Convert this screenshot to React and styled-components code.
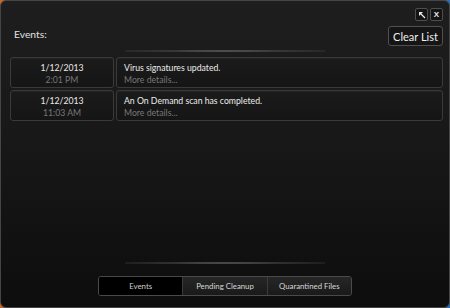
import React from 'react';
import styled, { createGlobalStyle } from 'styled-components';

const GlobalStyle = createGlobalStyle`
  html, body {
    margin: 0;
    padding: 0;
    background: linear-gradient(90deg, #c8662e 0%, #274a78 60%, #2a6db0 100%);
  }
  #root {
    width: 450px;
    height: 308px;
  }
`;

const Window = styled.div`
  box-sizing: border-box;
  width: 450px;
  height: 308px;
  display: flex;
  flex-direction: column;
  border: 1px solid #454545;
  border-radius: 6px;
  background: linear-gradient(180deg, #1e1e1e 0%, #181818 45%, #0d0d0d 100%);
  font-family: Lato, "Open Sans", sans-serif;
  color: #e6e6e6;
  overflow: hidden;
`;

const TitleBar = styled.div`
  display: flex;
  justify-content: flex-end;
  gap: 2px;
  padding: 7px 6px 0 0;
`;

const IconButton = styled.div`
  box-sizing: border-box;
  width: 13px;
  height: 13px;
  display: flex;
  align-items: center;
  justify-content: center;
  border: 1px solid #4e4e4e;
  border-radius: 2px;
  background: #141414;
  color: #e8e8e8;
  font-family: "Liberation Sans", sans-serif;
  font-size: 8px;
  font-weight: bold;
  line-height: 1;
`;

const Header = styled.div`
  display: flex;
  align-items: center;
  justify-content: space-between;
  padding: 0 6px 0 13px;
  margin-top: 5px;
`;

const Title = styled.div`
  font-size: 10.3px;
  color: #e2e2e2;
  margin-top: -4px;
`;

const ClearButton = styled.div`
  box-sizing: border-box;
  height: 20px;
  width: 55px;
  display: flex;
  align-items: center;
  justify-content: center;
  border: 1px solid #505050;
  border-radius: 3px;
  background: #151515;
  font-size: 11px;
  color: #f0f0f0;
`;

const Glow = styled.div`
  height: 2px;
  width: ${p => p.$width}px;
  margin: ${p => p.$margin};
  align-self: center;
  background: radial-gradient(ellipse at center, rgba(140,140,140,0.85) 0%, rgba(90,90,90,0.45) 50%, rgba(40,40,40,0) 100%);
`;

const List = styled.div`
  display: flex;
  flex-direction: column;
  gap: 2px;
  padding: 5px 6px 0 9px;
`;

const Row = styled.div`
  display: flex;
  gap: 2px;
`;

const Cell = styled.div`
  box-sizing: border-box;
  height: 31px;
  padding-top: 2px;
  display: flex;
  flex-direction: column;
  justify-content: center;
  border: 1px solid #3a3a3a;
  border-radius: 3px;
  background: linear-gradient(180deg, #1b1b1b 0%, #151515 100%);
  box-shadow: inset 0 1px 0 rgba(255,255,255,0.03);
  font-size: 8.7px;
  line-height: 12px;
`;

const DateCell = styled(Cell)`
  width: 104px;
  align-items: center;
`;

const MessageCell = styled(Cell)`
  flex: 1;
  padding-left: 7px;
`;

const Primary = styled.div`
  color: #ececec;
`;

const Secondary = styled.div`
  color: #777777;
`;

const Spacer = styled.div`
  flex: 1;
`;

const Tabs = styled.div`
  box-sizing: border-box;
  align-self: center;
  display: flex;
  width: 254px;
  height: 20px;
  margin: 0 0 11px 0;
  border: 1px solid #4a4a4a;
  border-radius: 3px;
  overflow: hidden;
`;

const Tab = styled.div`
  flex: 1;
  display: flex;
  align-items: center;
  justify-content: center;
  font-size: 7.8px;
  color: ${p => (p.$active ? '#cfcfcf' : '#d8d8d8')};
  background: ${p => (p.$active ? '#000' : 'linear-gradient(180deg, #262626 0%, #1a1a1a 100%)')};
  & + & {
    border-left: 1px solid #3c3c3c;
  }
`;

const events = [
  { date: '1/12/2013', time: '2:01 PM', text: 'Virus signatures updated.' },
  { date: '1/12/2013', time: '11:03 AM', text: 'An On Demand scan has completed.' },
];

export default function App() {
  return (
    <>
      <GlobalStyle />
      <Window>
        <TitleBar>
          <IconButton>
            <svg width="8" height="8" viewBox="0 0 8 8">
              <path d="M7 7 L2 2" stroke="#e8e8e8" strokeWidth="1.3" />
              <path d="M1 1 L5 1 L1 5 Z" fill="#e8e8e8" />
            </svg>
          </IconButton>
          <IconButton>X</IconButton>
        </TitleBar>
        <Header>
          <Title>Events:</Title>
          <ClearButton>Clear List</ClearButton>
        </Header>
        <Glow $width={200} $margin="4px 0 0 0" />
        <List>
          {events.map((e, i) => (
            <Row key={i}>
              <DateCell>
                <Primary>{e.date}</Primary>
                <Secondary>{e.time}</Secondary>
              </DateCell>
              <MessageCell>
                <Primary>{e.text}</Primary>
                <Secondary>More details...</Secondary>
              </MessageCell>
            </Row>
          ))}
        </List>
        <Spacer />
        <Glow $width={200} $margin="0 0 12px 0" />
        <Tabs>
          <Tab $active>Events</Tab>
          <Tab>Pending Cleanup</Tab>
          <Tab>Quarantined Files</Tab>
        </Tabs>
      </Window>
    </>
  );
}
